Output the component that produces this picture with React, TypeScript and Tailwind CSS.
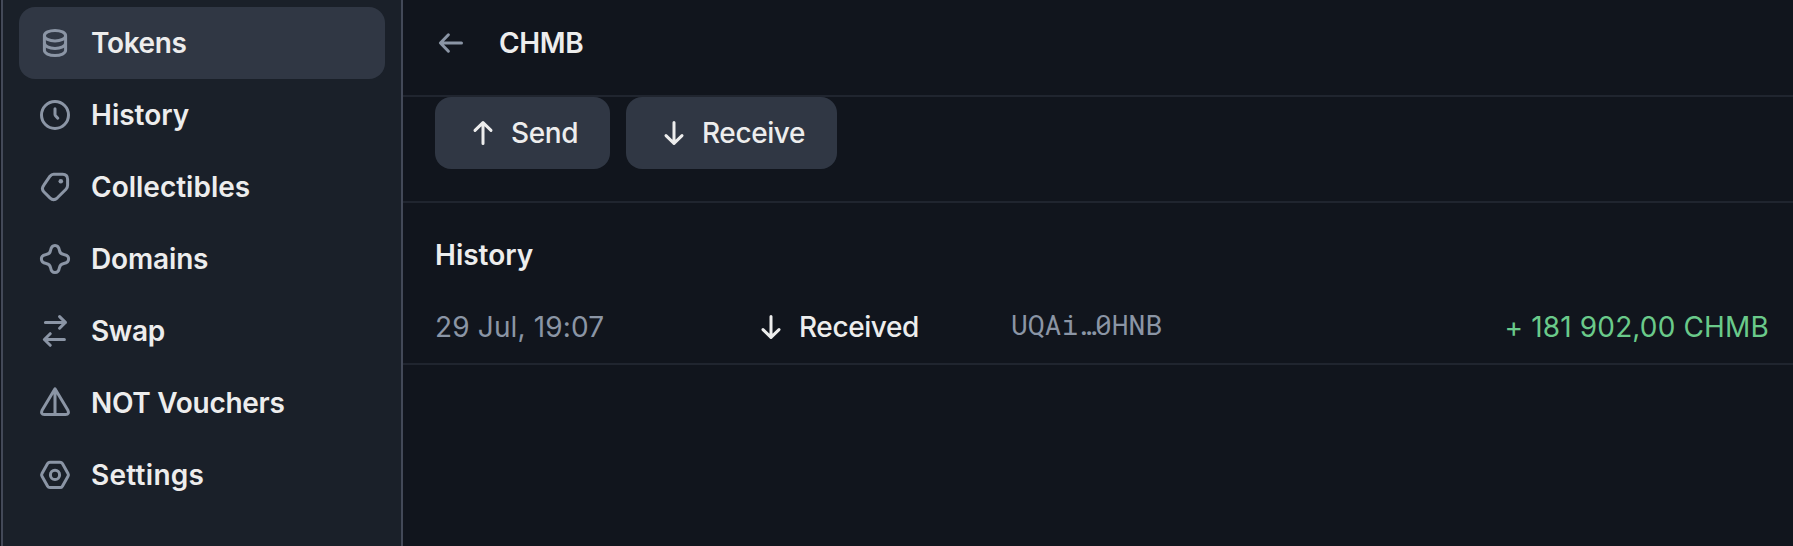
import type { ReactNode } from 'react';

const Icon = ({ children, className = '' }: { children: ReactNode; className?: string }) => (
  <svg
    viewBox="0 0 32 32"
    className={`size-8 shrink-0 ${className}`}
    fill="none"
    stroke="currentColor"
    strokeWidth="3"
    strokeLinecap="round"
    strokeLinejoin="round"
  >
    {children}
  </svg>
);

const ArrowDown = () => (
  <Icon>
    <path d="M16 5.4V26.4M8 18.6L16 26.4L24 18.6" />
  </Icon>
);

const ArrowUp = () => (
  <Icon>
    <path d="M16 26.6V5.6M8 13.4L16 5.6L24 13.4" />
  </Icon>
);

const items: { label: string; tracking: string; active?: boolean; icon: ReactNode }[] = [
  {
    label: 'Tokens',
    tracking: 'tracking-[-0.35px]',
    active: true,
    icon: (
      <>
        <ellipse cx="16" cy="8.7" rx="10.6" ry="5.3" />
        <path d="M5.4 8.7V23.3C5.4 26.3 10.1 28.6 16 28.6S26.6 26.3 26.6 23.3V8.7" />
        <path d="M5.4 16C5.4 19 10.1 21.4 16 21.4S26.6 19 26.6 16" />
      </>
    ),
  },
  {
    label: 'History',
    tracking: 'tracking-normal',
    icon: (
      <>
        <circle cx="16" cy="16" r="13.5" />
        <path d="M16 9.7V15.2Q16 16 16.5 16.7L18.8 19.2" />
      </>
    ),
  },
  {
    label: 'Collectibles',
    tracking: 'tracking-normal',
    icon: (
      <>
        <path d="M14.6 3.2H23.6Q28.6 3.2 28.6 8.2V14.2Q28.6 16.6 27 18.2L18.4 26.8Q14.6 30.4 10.9 26.8L4.8 20.7Q2 17.6 4.8 14.2L11 5.2Q12.6 3.2 14.6 3.2Z" />
        <circle cx="21.8" cy="10.2" r="2.3" fill="currentColor" stroke="none" />
      </>
    ),
  },
  {
    label: 'Domains',
    tracking: 'tracking-[-0.15px]',
    icon: (
      <path d="M16 2.4C18.8 2.4 20 4.6 20.4 7.2C20.9 10.2 21.8 11.1 24.8 11.6C27.4 12 29.6 13.2 29.6 16C29.6 18.8 27.4 20 24.8 20.4C21.8 20.9 20.9 21.8 20.4 24.8C20 27.4 18.8 29.6 16 29.6C13.2 29.6 12 27.4 11.6 24.8C11.1 21.8 10.2 20.9 7.2 20.4C4.6 20 2.4 18.8 2.4 16C2.4 13.2 4.6 12 7.2 11.6C10.2 11.1 11.1 10.2 11.6 7.2C12 4.6 13.2 2.4 16 2.4Z" />
    ),
  },
  {
    label: 'Swap',
    tracking: 'tracking-[-0.35px]',
    icon: (
      <path d="M6.4 7.4H26.4M20.6 1.6L26.4 7.4L20.6 13.2M25.4 24.5H5.4M11.2 18.7L5.4 24.5L11.2 30.3" />
    ),
  },
  {
    label: 'NOT Vouchers',
    tracking: 'tracking-[-0.28px]',
    icon: (
      <path d="M16 1.8L28.9 23.2Q30.6 27.4 26.6 27.6H5.4Q1.4 27.4 3.1 23.2ZM16 2V27" />
    ),
  },
  {
    label: 'Settings',
    tracking: 'tracking-[0.28px]',
    icon: (
      <>
        <path d="M11 3.2H21Q22.6 3.2 23.4 4.5L29 14.4Q29.8 15.8 29 17.2L23.4 27.2Q22.6 28.6 21 28.6H11Q9.4 28.6 8.6 27.2L3 17.2Q2.2 15.8 3 14.4L8.6 4.5Q9.4 3.2 11 3.2Z" />
        <circle cx="16" cy="15.9" r="4.6" />
      </>
    ),
  },
];

export default function App() {
  return (
    <div className="flex h-[546px] w-full overflow-hidden bg-[#11151d] pl-px font-['Inter',sans-serif] text-[28px] leading-10 text-[#ededed]">
      <aside className="w-[402px] shrink-0 border-x-2 border-[#434958] bg-[#1a2029] px-4 pt-[7px]">
        <nav className="flex flex-col">
          {items.map(({ label, tracking, active, icon }) => (
            <a
              key={label}
              className={`flex h-[72px] items-center gap-5 rounded-2xl pl-5 font-semibold ${active ? 'bg-[#303744]' : ''}`}
            >
              <Icon className="text-[#8b95a5]">{icon}</Icon>
              <span className={tracking}>{label}</span>
            </a>
          ))}
        </nav>
      </aside>
      <main className="min-w-0 flex-1">
        <header className="flex h-[97px] items-center gap-8 border-b-2 border-[#20252f] pb-[9px] pl-8">
          <Icon className="text-[#8b95a5]">
            <path d="M26.5 16H5.6M13.4 7.8L5.4 16L13.4 24.2" />
          </Icon>
          <h1 className="font-semibold tracking-[-0.35px]">CHMB</h1>
        </header>
        <div className="flex h-[106px] items-start gap-4 border-b-2 border-[#20252f] pl-8">
          <button className="flex h-[72px] w-[175px] items-center gap-3 rounded-2xl bg-[#303744] pl-8 font-medium tracking-[-0.4px]">
            <ArrowUp />
            Send
          </button>
          <button className="flex h-[72px] w-[211px] items-center gap-3 rounded-2xl bg-[#303744] pl-8 font-medium tracking-[-0.4px]">
            <ArrowDown />
            Receive
          </button>
        </div>
        <h2 className="pt-8 pl-8 font-semibold">History</h2>
        <div className="flex h-[90px] items-end border-b-2 border-[#20252f] pr-6 pb-4 pl-8">
          <span className="w-80 tracking-[0.15px] text-[#8b95a5]">29 Jul, 19:07</span>
          <span className="flex w-64 items-center gap-3 font-medium tracking-[-0.4px]">
            <ArrowDown />
            Received
          </span>
          <span className="pb-0.5 font-['Roboto_Mono','Liberation_Mono',monospace] text-[#8b95a5]">UQAi…0HNB</span>
          <span className="ml-auto tracking-[0.15px] text-[#6aca8a]">+ 181 902,00 CHMB</span>
        </div>
      </main>
    </div>
  );
}
